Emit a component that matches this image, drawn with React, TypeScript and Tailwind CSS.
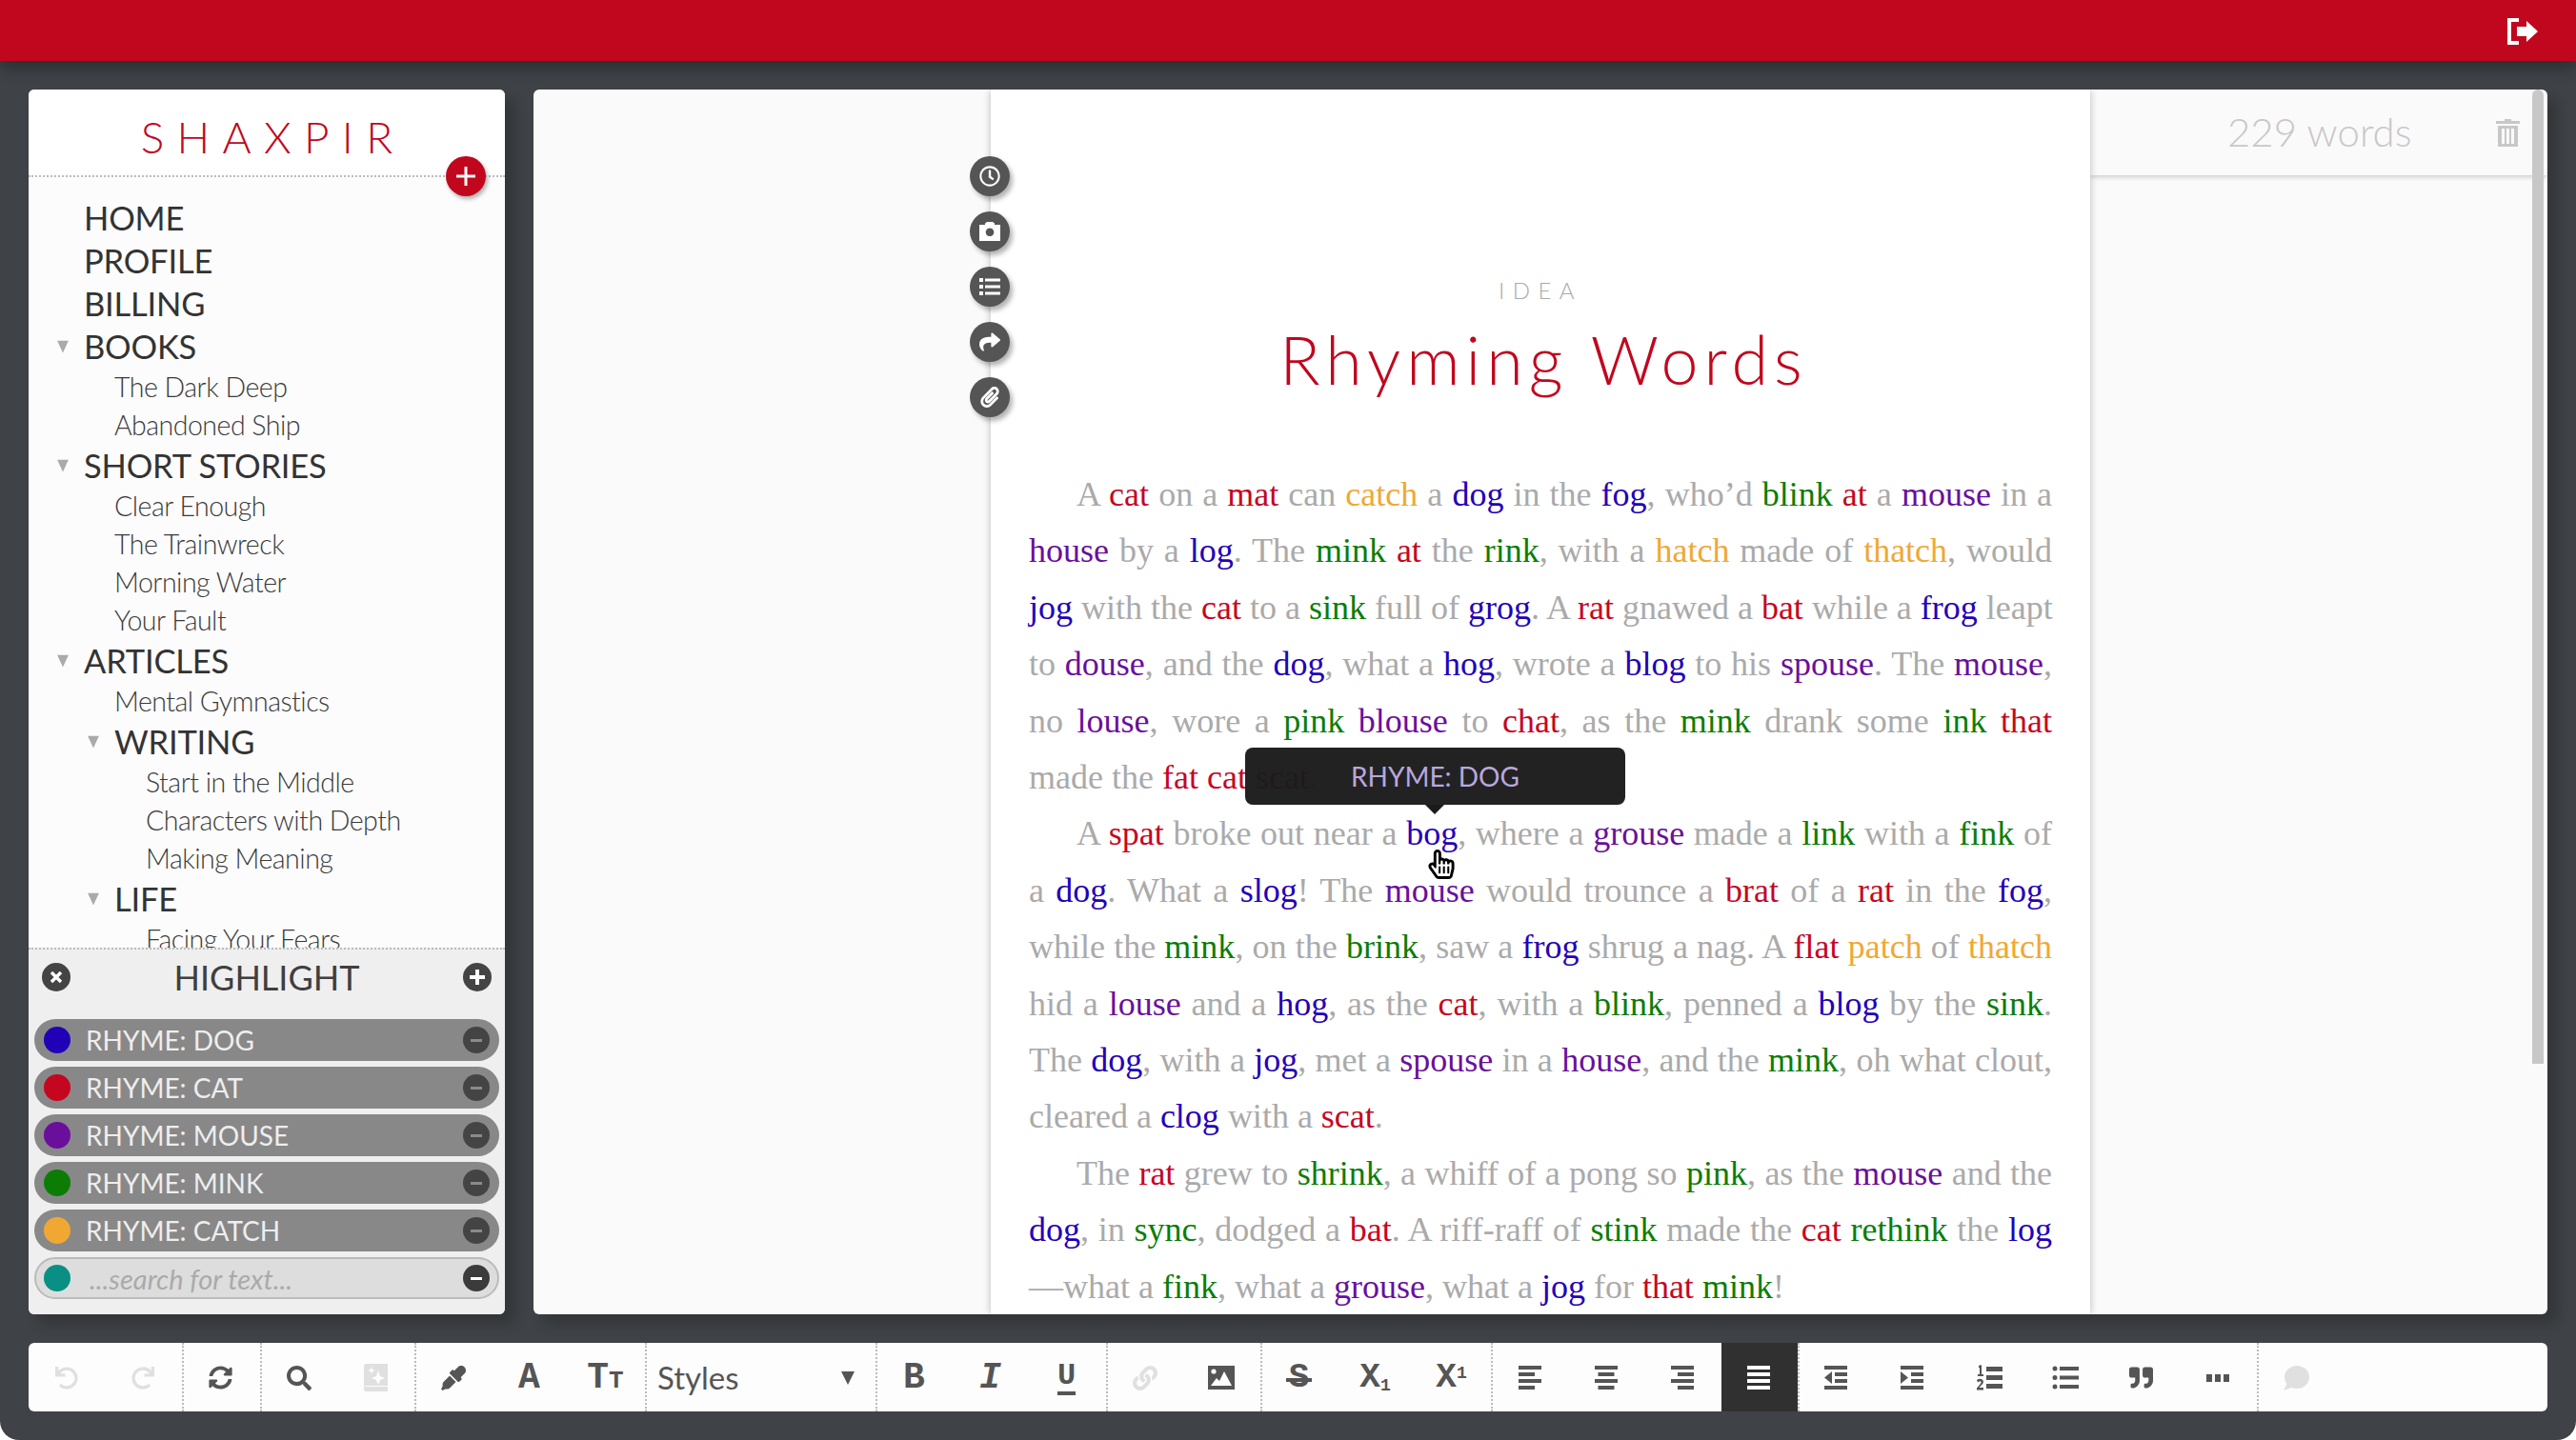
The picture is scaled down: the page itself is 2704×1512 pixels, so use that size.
import React from "react";
import { FaUndo, FaRedo, FaSyncAlt, FaSearch, FaEyeDropper, FaLink, FaQuoteRight, FaRegClock, FaShare, FaPaperclip, FaRegHandPointer } from "react-icons/fa";

const colors: Record<string, string> = {
  r: "text-[#c5061f]",
  b: "text-[#2200b8]",
  p: "text-[#6a0f9c]",
  g: "text-[#0b7d05]",
  o: "text-[#f0a833]",
};

const lines: { t: string; indent?: boolean; last?: boolean }[] = [
  { indent: true, t: "A {r:cat} on a {r:mat} can {o:catch} a {b:dog} in the {b:fog}, who’d {g:blink} {r:at} a {p:mouse} in a" },
  { t: "{p:house} by a {b:log}. The {g:mink} {r:at} the {g:rink}, with a {o:hatch} made of {o:thatch}, would" },
  { t: "{b:jog} with the {r:cat} to a {g:sink} full of {b:grog}. A {r:rat} gnawed a {r:bat} while a {b:frog} leapt" },
  { t: "to {p:douse}, and the {b:dog}, what a {b:hog}, wrote a {b:blog} to his {p:spouse}. The {p:mouse}," },
  { t: "no {p:louse}, wore a {g:pink} {p:blouse} to {r:chat}, as the {g:mink} drank some {g:ink} {r:that}" },
  { last: true, t: "made the {r:fat} {r:cat} {r:scat}." },
  { indent: true, t: "A {r:spat} broke out near a {b:bog}, where a {p:grouse} made a {g:link} with a {g:fink} of" },
  { t: "a {b:dog}. What a {b:slog}! The {p:mouse} would trounce a {r:brat} of a {r:rat} in the {b:fog}," },
  { t: "while the {g:mink}, on the {g:brink}, saw a {b:frog} shrug a nag. A {r:flat} {o:patch} of {o:thatch}" },
  { t: "hid a {p:louse} and a {b:hog}, as the {r:cat}, with a {g:blink}, penned a {b:blog} by the {g:sink}." },
  { t: "The {b:dog}, with a {b:jog}, met a {p:spouse} in a {p:house}, and the {g:mink}, oh what clout," },
  { last: true, t: "cleared a {b:clog} with a {r:scat}." },
  { indent: true, t: "The {r:rat} grew to {g:shrink}, a whiff of a pong so {g:pink}, as the {p:mouse} and the" },
  { t: "{b:dog}, in {g:sync}, dodged a {r:bat}. A riff-raff of {g:stink} made the {r:cat} {g:rethink} the {b:log}" },
  { last: true, t: "—what a {g:fink}, what a {p:grouse}, what a {b:jog} for {r:that} {g:mink}!" },
];

function Rich({ t }: { t: string }) {
  const parts = t.split(/(\{[a-z]:[^}]+\})/);
  return (
    <>
      {parts.map((p, i) => {
        const m = p.match(/^\{([a-z]):([^}]+)\}$/);
        return m ? <span key={i} className={colors[m[1]]}>{m[2]}</span> : <span key={i}>{p}</span>;
      })}
    </>
  );
}

const Tri = () => (
  <svg width="12" height="13" viewBox="0 0 12 13" className="absolute left-[-28px] top-1/2 -translate-y-1/2">
    <path d="M0 0H12L6 13Z" fill="#aaa" />
  </svg>
);

function Head({ label, tri, left = "pl-[58px]" }: { label: string; tri?: boolean; left?: string }) {
  return (
    <div className={`h-[45px] flex items-center text-[34.5px] tracking-[-0.2px] text-[#333] ${left}`}>
      <span className="relative">{tri && <Tri />}{label}</span>
    </div>
  );
}
function Sub({ label, left = "pl-[90px]" }: { label: string; left?: string }) {
  return <div className={`h-[40px] flex items-center text-[28.5px] font-light text-[#3a3a3a] tracking-[-0.5px] whitespace-nowrap ${left}`}>{label}</div>;
}

function Pill({ label, dot }: { label: string; dot: string }) {
  return (
    <div className="h-[44px] w-[488px] ml-[6px] rounded-full bg-[#888888] flex items-center pl-[10px] pr-[10px]">
      <span className={`w-[28px] h-[28px] rounded-full ${dot}`} />
      <span className="ml-[16px] flex-1 text-[28px] text-[#eeeeee] leading-none">{label}</span>
      <span className="w-[28px] h-[28px] rounded-full bg-[#444444] flex items-center justify-center">
        <span className="w-[12px] h-[3px] bg-[#8a8a8a]" />
      </span>
    </div>
  );
}

const ic = "#555555";
const off = "#e0e0e0";

function Btn({ children, active }: { children?: React.ReactNode; active?: boolean }) {
  return <div className={`w-[80px] h-full flex items-center justify-center shrink-0 pr-[3px] pt-[1px] ${active ? "bg-[#303030]" : ""}`}>{children}</div>;
}
function Group({ children, first }: { children: React.ReactNode; first?: boolean }) {
  return <div className={`flex h-full ${first ? "pl-px" : "border-l-2 border-dotted border-[#bbbbbb]"}`}>{children}</div>;
}

const Slab = ({ children, cls = "" }: { children: React.ReactNode; cls?: string }) => (
  <span className={`font-['Liberation_Mono',monospace] text-[#555555] font-bold leading-none ${cls}`}>{children}</span>
);

function Bars({ kind, color = ic }: { kind: "l" | "c" | "r" | "j"; color?: string }) {
  const x = (w: number) => (kind === "c" ? (24 - w) / 2 : kind === "r" ? 24 - w : 0);
  const ws = kind === "j" ? [24, 24, 24, 24] : [24, 17, 24, 17];
  return (
    <svg width="24" height="25" viewBox="0 0 24 25">
      {ws.map((w, i) => <rect key={i} x={x(w)} y={i * 7} width={w} height="4" fill={color} />)}
    </svg>
  );
}
function Dent({ right }: { right?: boolean }) {
  return (
    <svg width="25" height="25" viewBox="0 0 25 25" fill={ic}>
      <rect width="24" height="4" /><rect y="21" width="24" height="4" />
      <rect x="11" y="7" width="13" height="4" /><rect x="11" y="14" width="13" height="4" />
      {right ? <path d="M0 6L8 12.5L0 19Z" /> : <path d="M8 6L0 12.5L8 19Z" />}
    </svg>
  );
}
const OL = () => (
  <svg width="28" height="27" viewBox="0 0 28 27" fill={ic}>
    <path d="M3 1L6 0V10H8V12H2V10H4V3L3 3.5Z" />
    <path d="M1 17C1 14 8 14 8 18C8 20 5 22 3.5 24H8V26.5H1V24.5C3 22 5.5 20 5.5 18C5.5 17 3.5 17 3 18.5Z" />
    <rect x="11" y="2" width="17" height="5" /><rect x="11" y="11" width="17" height="5" /><rect x="11" y="20" width="17" height="5" />
  </svg>
);
const UL = () => (
  <svg width="28" height="25" viewBox="0 0 28 25" fill={ic}>
    <circle cx="3" cy="3" r="2.5" /><circle cx="3" cy="12.5" r="2.5" /><circle cx="3" cy="22" r="2.5" />
    <rect x="8" y="1" width="20" height="4" /><rect x="8" y="10.5" width="20" height="4" /><rect x="8" y="20" width="20" height="4" />
  </svg>
);
const Img = () => (
  <svg width="28" height="25" viewBox="0 0 28 25">
    <rect width="28" height="25" fill={ic} />
    <circle cx="6" cy="6" r="2.6" fill="#fff" />
    <path d="M3 21L9 13L12 16L17 6L25 21Z" fill="#fff" />
  </svg>
);
const Book = () => (
  <svg width="26" height="29" viewBox="0 0 26 29">
    <path d="M3 0H26V23H3C2 23 1 24 1 25V3C1 1 2 0 3 0Z" fill={off} />
    <path d="M1 25C1 23.5 2 24 3 24H26V29H3C2 29 1 28 1 27Z" fill={off} />
    <path d="M16 7L18 13L23 15L18 17L16 22L14 17L9 15L14 13Z" fill="#fff" />
    <path d="M9 3L10 6L13 7L10 8L9 11L8 8L5 7L8 6Z" fill="#fff" />
  </svg>
);
const Comment = () => (
  <svg width="28" height="26" viewBox="0 0 28 26" fill={off}>
    <ellipse cx="15" cy="12" rx="13" ry="12" />
    <path d="M5 18L1 26L12 22Z" />
  </svg>
);
const Dots = () => (
  <svg width="24" height="8" viewBox="0 0 24 8" fill={ic}>
    <rect width="6" height="8" /><rect x="9" width="6" height="8" /><rect x="18" width="6" height="8" />
  </svg>
);
const Exit = () => (
  <svg width="32" height="28" viewBox="0 0 32 28" fill="#fff">
    <path d="M0 0H12V4H4V24H12V28H0Z" />
    <path d="M10 9H20V3L32 14L20 25V19H10Z" />
  </svg>
);
const Trash = () => (
  <svg width="25" height="29" viewBox="0 0 25 29" fill="#c8c8c8">
    <path d="M9 0H16V2H25V5H0V2H9Z" />
    <path d="M2 7H23V29H2ZM6 10V26H9V10ZM11 10V26H14V10ZM16 10V26H19V10Z" fillRule="evenodd" />
  </svg>
);
const Camera = () => (
  <svg width="22" height="20" viewBox="0 0 22 20" fill="#fff">
    <path fillRule="evenodd" d="M0 3H6V1.5L8 0H14L16 1.5V3H22V20H0ZM11 6.5A4.3 4.3 0 1 0 11.01 6.5Z" />
  </svg>
);
const ListI = () => (
  <svg width="22" height="18" viewBox="0 0 22 18" fill="#fff">
    <rect width="4" height="4" /><rect y="7" width="4" height="4" /><rect y="14" width="4" height="4" />
    <rect x="6" y="0.5" width="16" height="3" /><rect x="6" y="7.5" width="16" height="3" /><rect x="6" y="14.5" width="16" height="3" />
  </svg>
);

const Float = ({ children }: { children: React.ReactNode }) => (
  <div className="w-[42px] h-[42px] rounded-full bg-[#555555] flex items-center justify-center shadow-[3px_4px_5px_rgba(0,0,0,0.3)]">{children}</div>
);

export default function App() {
  return (
    <div className="w-[2704px] h-[1512px] bg-[#3f4246] rounded-b-[20px] overflow-hidden flex flex-col font-['Lato',sans-serif]">
      <header className="h-16 shrink-0 bg-[#c1071e] flex items-center justify-end pr-[40px] pt-[2px] shadow-[0_6px_16px_rgba(0,0,0,0.35)] z-20">
        <Exit />
      </header>

      <div className="h-[1286px] mt-[30px] ml-[30px] mr-[30px] flex gap-[30px] shrink-0">
        <aside className="w-[500px] rounded-md overflow-hidden flex flex-col bg-[#fcfcfc] shadow-[10px_10px_14px_rgba(0,0,0,0.2)]">
          <div className="relative h-[92px] shrink-0 bg-white border-b-2 border-dotted border-[#bbbbbb] flex justify-center">
            <div className="pt-[22px] text-[46px] leading-[56px] font-light text-[#c1071e] tracking-[13.3px] pl-[13px]">SHAXPIR</div>
            <div className="absolute left-[438px] top-[70px] z-10 w-[42px] h-[42px] rounded-full bg-[#c1071e] flex items-center justify-center shadow-[2px_3px_4px_rgba(0,0,0,0.3)]">
              <svg width="20" height="20" viewBox="0 0 20 20" fill="#fff"><rect x="8.5" width="3" height="20" /><rect y="8.5" width="20" height="3" /></svg>
            </div>
          </div>
          <nav className="flex-1 min-h-0 overflow-hidden pt-[20px]">
            <Head label="HOME" />
            <Head label="PROFILE" />
            <Head label="BILLING" />
            <Head label="BOOKS" tri />
            <Sub label="The Dark Deep" />
            <Sub label="Abandoned Ship" />
            <Head label="SHORT STORIES" tri />
            <Sub label="Clear Enough" />
            <Sub label="The Trainwreck" />
            <Sub label="Morning Water" />
            <Sub label="Your Fault" />
            <Head label="ARTICLES" tri />
            <Sub label="Mental Gymnastics" />
            <Head label="WRITING" tri left="pl-[90px]" />
            <Sub label="Start in the Middle" left="pl-[123px]" />
            <Sub label="Characters with Depth" left="pl-[123px]" />
            <Sub label="Making Meaning" left="pl-[123px]" />
            <Head label="LIFE" tri left="pl-[90px]" />
            <Sub label="Facing Your Fears" left="pl-[123px]" />
          </nav>
          <section className="h-[385px] shrink-0 bg-[#efefef] border-t-2 border-dotted border-[#bbbbbb] flex flex-col">
            <div className="h-[62px] shrink-0 flex items-center justify-between px-[14px] -mt-[2px] mb-[3px]">
              <span className="w-[30px] h-[30px] rounded-full bg-[#444444] flex items-center justify-center">
                <svg width="14" height="14" viewBox="0 0 14 14" stroke="#fff" strokeWidth="3.4"><path d="M2 2L12 12M12 2L2 12" /></svg>
              </span>
              <span className="text-[36px] text-[#3f3f3f] leading-none">HIGHLIGHT</span>
              <span className="w-[30px] h-[30px] rounded-full bg-[#444444] flex items-center justify-center">
                <svg width="16" height="16" viewBox="0 0 16 16" fill="#fff"><rect x="6" width="4" height="16" /><rect y="6" width="16" height="4" /></svg>
              </span>
            </div>
            <div className="mt-[10px] flex flex-col gap-[6px]">
              <Pill label="RHYME: DOG" dot="bg-[#2200b8]" />
              <Pill label="RHYME: CAT" dot="bg-[#c5061f]" />
              <Pill label="RHYME: MOUSE" dot="bg-[#6a0f9c]" />
              <Pill label="RHYME: MINK" dot="bg-[#0b7d05]" />
              <Pill label="RHYME: CATCH" dot="bg-[#f0a833]" />
              <div className="h-[44px] w-[488px] ml-[6px] rounded-full bg-[#dddddd] border-2 border-[#bbbbbb] flex items-center pl-[8px] pr-[8px]">
                <span className="w-[28px] h-[28px] rounded-full bg-[#0a8f84]" />
                <span className="ml-[20px] flex-1 text-[29px] italic text-[#aaaaaa] leading-none">...search for text...</span>
                <span className="w-[28px] h-[28px] rounded-full bg-[#3b3b3b] flex items-center justify-center">
                  <span className="w-[12px] h-[3px] bg-white" />
                </span>
              </div>
            </div>
          </section>
        </aside>

        <main className="relative w-[2114px] rounded-md overflow-hidden flex bg-[#fafafa] shadow-[10px_10px_14px_rgba(0,0,0,0.2)]">
          <div className="w-[480px] shrink-0" />
          <article className="relative z-10 w-[1154px] shrink-0 bg-white shadow-[0_0_8px_rgba(0,0,0,0.25)] pt-[197px] px-[40px] font-['Liberation_Serif',serif]">
            <div className="text-center text-[24px] leading-[28px] font-light tracking-[8.5px] text-[#aaaaaa] font-['Lato',sans-serif]">IDEA</div>
            <h1 className="mt-[16px] pl-[7px] text-center text-[70px] leading-[84px] font-light tracking-[6px] text-[#c1071e] font-['Lato',sans-serif]">Rhyming Words</h1>
            <div className="mt-[71px] text-[36px] leading-[59.4px] text-[#aaaaaa]">
              {lines.map((l, i) => (
                <div key={i} className={`${l.indent ? "pl-[50px]" : ""} ${l.last ? "" : "text-justify [text-align-last:justify]"} whitespace-nowrap`}>
                  <Rich t={l.t} />
                </div>
              ))}
            </div>
            <div className="absolute left-[267px] top-[691px] w-[399px] h-[60px] rounded-lg bg-[#1b1b1b]/97 flex items-center justify-center text-[28px] text-[#b9a7dc] font-['Lato',sans-serif]">
              RHYME: DOG
              <span className="absolute left-[189px] top-[60px] w-0 h-0 border-x-[10px] border-x-transparent border-t-[10px] border-t-[#1b1b1b]" />
            </div>
            <FaRegHandPointer className="absolute left-[458px] top-[798px] w-[30px] h-[31px] text-black" />
          </article>
          <div className="w-[480px] shrink-0">
            <div className="h-[90px] flex items-center relative shadow-[0_2px_5px_rgba(0,0,0,0.18)]">
              <span className="ml-[144px] -mt-[3px] text-[42px] font-light text-[#c8c8c8] leading-none">229 words</span>
              <span className="absolute left-[426px] top-[31px]"><Trash /></span>
            </div>
          </div>
          <div className="absolute z-20 left-[458px] top-[70px] flex flex-col gap-[16px]">
            <Float><FaRegClock color="#fff" size={22} /></Float>
            <Float><Camera /></Float>
            <Float><ListI /></Float>
            <Float><FaShare color="#fff" size={22} /></Float>
            <Float><FaPaperclip color="#fff" size={22} /></Float>
          </div>
          <div className="absolute z-20 left-[2098px] top-0 w-[12px] h-[1023px] rounded-t-md bg-[#c8c8c8]" />
        </main>
      </div>

      <div className="h-[72px] mt-[30px] mx-[30px] bg-[#fdfdfd] rounded-md flex shrink-0 overflow-hidden">
        <Group first>
          <Btn><FaUndo color={off} size={24} /></Btn>
          <Btn><FaRedo color={off} size={24} /></Btn>
        </Group>
        <Group><Btn><FaSyncAlt color={ic} size={25} /></Btn></Group>
        <Group>
          <Btn><FaSearch color={ic} size={26} /></Btn>
          <Btn><Book /></Btn>
        </Group>
        <Group>
          <Btn><FaEyeDropper color={ic} size={26} /></Btn>
          <Btn><Slab cls="text-[38px]">A</Slab></Btn>
          <Btn><Slab cls="text-[38px]">T<span className="text-[26px]">T</span></Slab></Btn>
        </Group>
        <Group>
          <div className="w-[240px] h-full flex items-center justify-between pl-[11px] pr-[22px] pt-[2px]">
            <span className="text-[33px] text-[#555555]">Styles</span>
            <svg width="14" height="14" viewBox="0 0 14 14"><path d="M0 0H14L7 14Z" fill={ic} /></svg>
          </div>
        </Group>
        <Group>
          <Btn><Slab cls="text-[38px]">B</Slab></Btn>
          <Btn><Slab cls="text-[38px] italic">I</Slab></Btn>
          <Btn><span className="border-b-4 border-[#555555] leading-none"><Slab cls="text-[32px] block">U</Slab></span></Btn>
        </Group>
        <Group>
          <Btn><FaLink color={off} size={26} /></Btn>
          <Btn><Img /></Btn>
        </Group>
        <Group>
          <Btn>
            <span className="relative flex items-center justify-center">
              <Slab cls="text-[36px]">S</Slab>
              <span className="absolute left-[-3px] right-[-3px] top-1/2 h-[4px] bg-[#555555]" />
            </span>
          </Btn>
          <Btn><Slab cls="text-[36px]">X<sub className="text-[18px]">1</sub></Slab></Btn>
          <Btn><Slab cls="text-[36px]">X<sup className="text-[18px]">1</sup></Slab></Btn>
        </Group>
        <Group>
          <Btn><Bars kind="l" /></Btn>
          <Btn><Bars kind="c" /></Btn>
          <Btn><Bars kind="r" /></Btn>
          <Btn active><Bars kind="j" color="#ffffff" /></Btn>
        </Group>
        <Group>
          <Btn><Dent /></Btn>
          <Btn><Dent right /></Btn>
          <Btn><OL /></Btn>
          <Btn><UL /></Btn>
          <Btn><FaQuoteRight color={ic} size={25} /></Btn>
          <Btn><Dots /></Btn>
        </Group>
        <Group><Btn><Comment /></Btn></Group>
      </div>
    </div>
  );
}
